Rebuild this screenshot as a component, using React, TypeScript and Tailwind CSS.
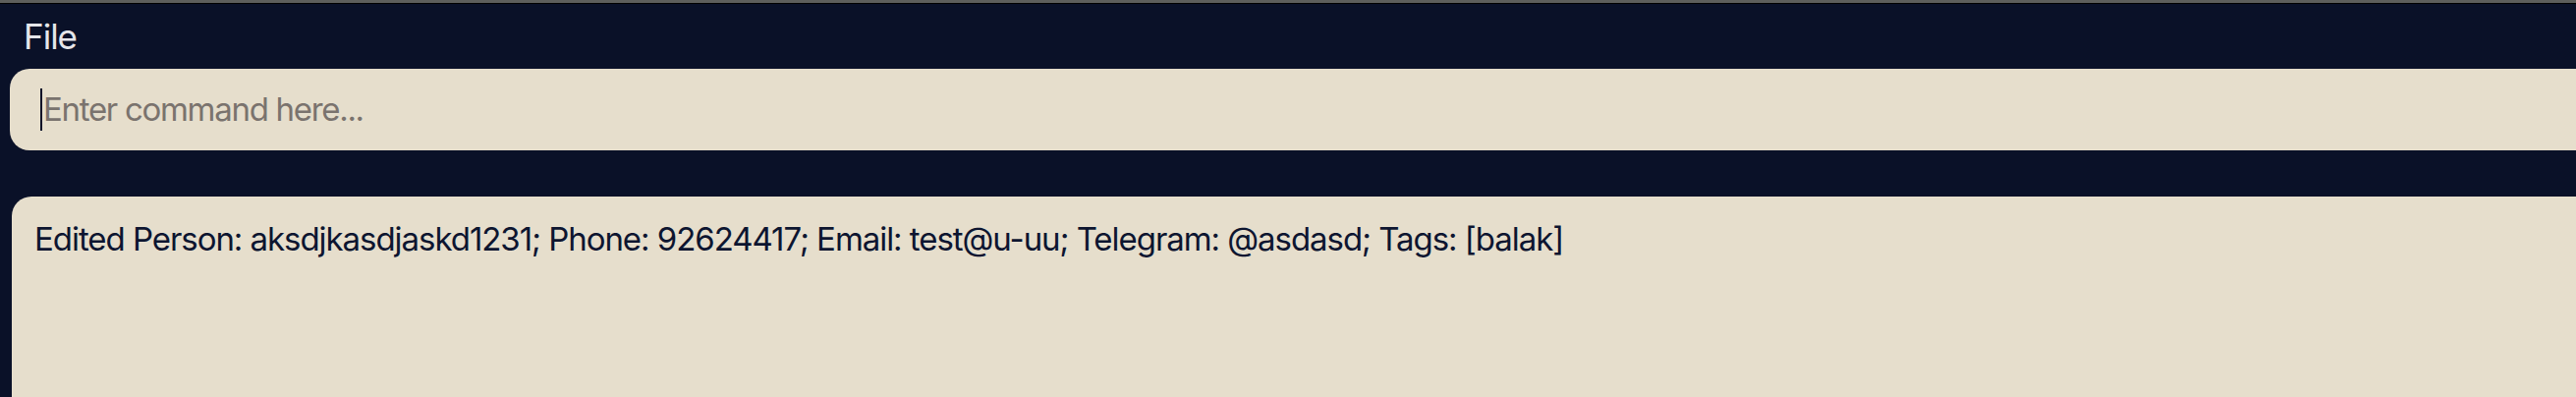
export default function App() {
  return (
    <div className="w-[2622px] h-[404px] overflow-hidden bg-[#0a1128] font-['Inter','Noto_Sans',sans-serif]">
      <div className="h-[3px] bg-[#5e5f5c]" />
      <div className="h-[1px] bg-[#000000]" />
      <div className="h-[66px] pl-[24px] pt-[7px]">
        <span className="text-[35px] leading-normal tracking-[-1px] text-[#e6e6ea]">File</span>
      </div>
      <div className="ml-[10px] h-[83px] rounded-l-[20px] bg-[#e6decc] flex items-center pl-[31px]">
        <div className="w-[2px] h-[43px] bg-[#0a1128]" />
        <span className="ml-[1px] text-[33px] leading-normal tracking-[-1.3px] text-[#7a736e]">Enter command here...</span>
      </div>
      <div className="h-[47px]" />
      <div className="ml-[12px] h-[210px] rounded-tl-[20px] bg-[#e6decc] pl-[23px] pt-[19px]">
        <p className="text-[33px] leading-normal tracking-[-1.05px] text-[#0d1530] whitespace-nowrap">
          Edited Person: aksdjkasdjaskd1231; Phone: 92624417; Email: test@u-uu; Telegram: @asdasd; Tags: [balak]
        </p>
      </div>
    </div>
  );
}
